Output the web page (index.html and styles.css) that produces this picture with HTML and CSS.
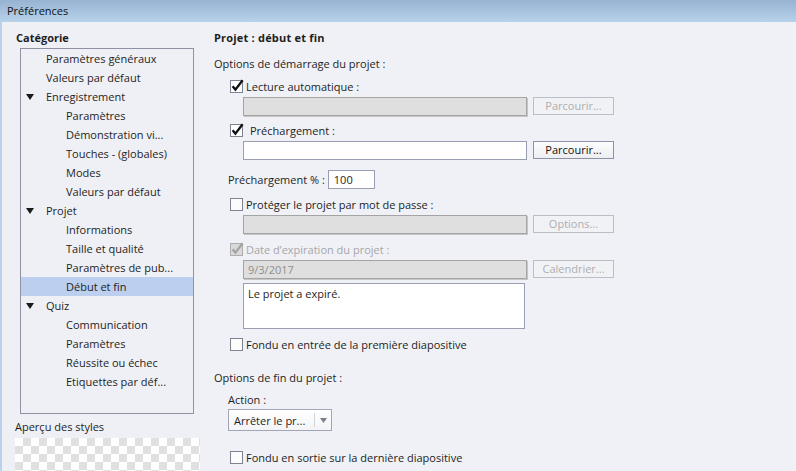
FILE: index.html
```html
<!DOCTYPE html>
<html lang="fr">
<head>
<meta charset="utf-8">
<title>Préférences</title>
<link rel="stylesheet" href="styles.css">
</head>
<body>
<div class="window">
  <div class="titlebar">Préférences</div>
  <div class="content">
    <aside class="sidebar">
      <div class="section-title">Catégorie</div>
      <ul class="tree">
        <li class="l1">Paramètres généraux</li>
        <li class="l1">Valeurs par défaut</li>
        <li class="l1 parent"><span class="tog"><svg width="8" height="6" viewBox="0 0 8 6"><path d="M0 0H8L4 6Z" fill="#1a1a1a"/></svg></span>Enregistrement</li>
        <li class="l2">Paramètres</li>
        <li class="l2">Démonstration vi...</li>
        <li class="l2">Touches - (globales)</li>
        <li class="l2">Modes</li>
        <li class="l2">Valeurs par défaut</li>
        <li class="l1 parent"><span class="tog"><svg width="8" height="6" viewBox="0 0 8 6"><path d="M0 0H8L4 6Z" fill="#1a1a1a"/></svg></span>Projet</li>
        <li class="l2">Informations</li>
        <li class="l2">Taille et qualité</li>
        <li class="l2">Paramètres de pub...</li>
        <li class="l2 selected">Début et fin</li>
        <li class="l1 parent"><span class="tog"><svg width="8" height="6" viewBox="0 0 8 6"><path d="M0 0H8L4 6Z" fill="#1a1a1a"/></svg></span>Quiz</li>
        <li class="l2">Communication</li>
        <li class="l2">Paramètres</li>
        <li class="l2">Réussite ou échec</li>
        <li class="l2">Etiquettes par déf...</li>
      </ul>
      <div class="preview-label">Aperçu des styles</div>
      <div class="checker"></div>
    </aside>

    <main class="panel">
      <div class="heading">Projet : début et fin</div>
      <div class="text-line mt10">Options de démarrage du projet :</div>
      <div class="indent">
        <div class="check mt6">
          <svg class="cb" width="15" height="15" viewBox="0 0 15 15"><rect x="0.5" y="1.5" width="12" height="12" fill="#fff" stroke="#7f8290"/><path d="M2.6 7.2L5.4 10.6L12.6 1.2" fill="none" stroke="#111" stroke-width="2.3"/></svg>
          <span>Lecture automatique :</span>
        </div>
        <div class="field-row mt3">
          <div class="input disabled"></div>
          <div class="btn disabled">Parcourir...</div>
        </div>
        <div class="check mt6">
          <svg class="cb" width="15" height="15" viewBox="0 0 15 15"><rect x="0.5" y="1.5" width="12" height="12" fill="#fff" stroke="#7f8290"/><path d="M2.6 7.2L5.4 10.6L12.6 1.2" fill="none" stroke="#111" stroke-width="2.3"/></svg>
          <span class="pad4">Préchargement :</span>
        </div>
        <div class="field-row mt3">
          <div class="input"></div>
          <div class="btn">Parcourir...</div>
        </div>
        <div class="pct-row mt10">
          <span>Préchargement % :</span>
          <div class="input small">100</div>
        </div>
        <div class="check mt7">
          <svg class="cb" width="15" height="15" viewBox="0 0 15 15"><rect x="0.5" y="1.5" width="12" height="12" fill="#fcfcfd" stroke="#7f8290"/></svg>
          <span>Protéger le projet par mot de passe :</span>
        </div>
        <div class="field-row mt3">
          <div class="input disabled"></div>
          <div class="btn disabled">Options...</div>
        </div>
        <div class="check mt7 is-disabled">
          <svg class="cb" width="15" height="15" viewBox="0 0 15 15"><rect x="0.5" y="1.5" width="12" height="12" fill="#d9d9d9" stroke="#aeaeae"/><path d="M2.6 7.2L5.4 10.6L12.6 1.2" fill="none" stroke="#a4a4a4" stroke-width="2.3"/></svg>
          <span>Date d’expiration du projet :</span>
        </div>
        <div class="field-row mt3">
          <div class="input disabled">9/3/2017</div>
          <div class="btn disabled">Calendrier...</div>
        </div>
        <div class="field-row mt4">
          <div class="textarea">Le projet a expiré.</div>
        </div>
        <div class="check mt7">
          <svg class="cb" width="15" height="15" viewBox="0 0 15 15"><rect x="0.5" y="1.5" width="12" height="12" fill="#fcfcfd" stroke="#7f8290"/></svg>
          <span>Fondu en entrée de la première diapositive</span>
        </div>
      </div>
      <div class="text-line mt18">Options de fin du projet :</div>
      <div class="indent">
        <div class="text-line mt6">Action :</div>
        <div class="select mt1">
          <span class="select-value">Arrêter le pr...</span>
          <span class="select-arrow"><svg width="7" height="5" viewBox="0 0 7 5"><path d="M0 0H7L3.5 5Z" fill="#7d808c"/></svg></span>
        </div>
        <div class="check mt18">
          <svg class="cb" width="15" height="15" viewBox="0 0 15 15"><rect x="0.5" y="1.5" width="12" height="12" fill="#fcfcfd" stroke="#7f8290"/></svg>
          <span>Fondu en sortie sur la dernière diapositive</span>
        </div>
      </div>
    </main>
  </div>
</div>
</body>
</html>
```

FILE: styles.css
```css
* { box-sizing: border-box; }
html, body { margin: 0; padding: 0; }
body {
  width: 796px;
  height: 471px;
  overflow: hidden;
  background: #eff1f6;
  font-family: "Open Sans", "Noto Sans", sans-serif;
  font-size: 11px;
  color: #1e1e1e;
}
.window { height: 471px; display: flex; flex-direction: column; }
.titlebar {
  height: 22px;
  line-height: 22px;
  padding-left: 7px;
  font-size: 11px;
  color: #111;
  background: linear-gradient(#97b3d2, #b8d2ea);
}
.content { flex: 1; display: flex; min-height: 0; }
.sidebar {
  width: 200px;
  flex: none;
  border-left: 2px solid #b9d1ea;
  padding-left: 13px;
  padding-top: 8px;
  background: #eff0f5;
}
.section-title { font-weight: bold; line-height: 16px; margin-left: 1px; }
.tree {
  list-style: none;
  margin: 2px 0 0 5px;
  padding: 0;
  width: 174px;
  height: 366px;
  border: 1px solid #8f92a4;
}
.tree li { height: 19px; line-height: 19px; display: flex; align-items: center; white-space: nowrap; }
.tree .l1 { padding-left: 25px; }
.tree .l1.parent { padding-left: 0; }
.tree .l2 { padding-left: 45px; }
.tree .selected { background: #bccfee; }
.tog { width: 25px; flex: none; display: flex; align-items: center; padding-left: 5px; }
.tog svg { display: block; }
.preview-label { margin-top: 5px; line-height: 16px; }
.checker {
  margin-top: 3px;
  width: 185px;
  height: 40px;
  background-color: #fff;
  background-image: conic-gradient(#e0e0e0 25%, #fff 0 50%, #e0e0e0 0 75%, #fff 0);
  background-size: 16px 16px;
}
.panel { flex: 1; padding-left: 14px; padding-top: 8px; }
.heading { font-weight: bold; line-height: 16px; letter-spacing: 0.2px; }
.text-line { line-height: 16px; }
.indent { padding-left: 14px; }
.check { display: flex; align-items: center; height: 16px; padding-left: 2px; }
.check .cb { flex: none; display: block; margin-right: 1px; }
.check .pad4 { padding-left: 4px; }
.is-disabled { color: #a6a6a6; }
.field-row { display: flex; align-items: flex-start; padding-left: 15px; }
.input {
  width: 284px;
  height: 19px;
  border: 1px solid #9a9eb3;
  background: #fff;
  line-height: 17px;
  padding-left: 4px;
}
.input.disabled {
  background: #dfdfdf;
  border-color: #a4a4a4;
  color: #8e8e8e;
  box-shadow: 1px 1px 0 #c6c6c6;
}
.input.small { width: 47px; margin-left: 3px; padding-left: 5px; }
.pct-row { display: flex; align-items: center; height: 19px; }
.btn {
  margin-left: 6px;
  width: 81px;
  height: 18px;
  border: 1px solid #8e92a6;
  background: linear-gradient(#fdfdfd, #eceef2);
  text-align: center;
  line-height: 16px;
  color: #111;
}
.btn.disabled {
  border-color: #bcbec6;
  background: #f1f2f6;
  color: #aeaeae;
}
.textarea {
  width: 282px;
  height: 46px;
  border: 1px solid #9a9eb3;
  background: #fff;
  padding: 2px 4px;
  line-height: 16px;
}
.select {
  width: 104px;
  height: 22px;
  border: 1px solid #a2a5b5;
  background: linear-gradient(#ffffff, #f3f4f7);
  display: flex;
  align-items: center;
}
.select-value { flex: 1; padding-left: 5px; white-space: nowrap; }
.select-arrow {
  width: 17px;
  height: 14px;
  border-left: 1px solid #d2d4dc;
  display: flex;
  align-items: center;
  justify-content: center;
}
.select-arrow svg { display: block; }
.mt1 { margin-top: 1px; }
.mt3 { margin-top: 3px; }
.mt4 { margin-top: 4px; }
.mt6 { margin-top: 6px; }
.mt7 { margin-top: 7px; }
.mt10 { margin-top: 10px; }
.mt18 { margin-top: 18px; }
```
